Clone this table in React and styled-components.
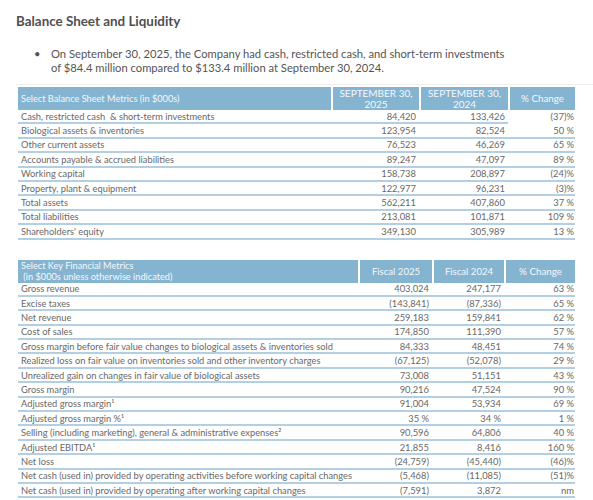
import React from "react";
import styled, { createGlobalStyle } from "styled-components";

const GlobalStyle = createGlobalStyle`
  body {
    margin: 0;
    background: #fff;
    font-family: Lato, "Open Sans", sans-serif;
  }
`;

const balanceRows = [
  ["Cash, restricted cash  & short-term investments", "84,420", "133,426", "(37)%"],
  ["Biological assets & inventories", "123,954", "82,524", "50 %"],
  ["Other current assets", "76,523", "46,269", "65 %"],
  ["Accounts payable & accrued liabilities", "89,247", "47,097", "89 %"],
  ["Working capital", "158,738", "208,897", "(24)%"],
  ["Property, plant & equipment", "122,977", "96,231", "(3)%"],
  ["Total assets", "562,211", "407,860", "37 %"],
  ["Total liabilities", "213,081", "101,871", "109 %"],
  ["Shareholders' equity", "349,130", "305,989", "13 %"],
];

const keyRows = [
  ["Gross revenue", "403,024", "247,177", "63 %"],
  ["Excise taxes", "(143,841)", "(87,336)", "65 %"],
  ["Net revenue", "259,183", "159,841", "62 %"],
  ["Cost of sales", "174,850", "111,390", "57 %"],
  ["Gross margin before fair value changes to biological assets & inventories sold", "84,333", "48,451", "74 %"],
  ["Realized loss on fair value on inventories sold and other inventory charges", "(67,125)", "(52,078)", "29 %"],
  ["Unrealized gain on changes in fair value of biological assets", "73,008", "51,151", "43 %"],
  ["Gross margin", "90,216", "47,524", "90 %"],
  ["Adjusted gross margin\u00b9", "91,004", "53,934", "69 %"],
  ["Adjusted gross margin %\u00b9", "35 %", "34 %", "1 %"],
  ["Selling (including marketing), general & administrative expenses\u00b2", "90,596", "64,806", "40 %"],
  ["Adjusted EBITDA\u00b9", "21,855", "8,416", "160 %"],
  ["Net loss", "(24,759)", "(45,440)", "(46)%"],
  ["Net cash (used in) provided by operating activities before working capital changes", "(5,468)", "(11,085)", "(51)%"],
  ["Net cash (used in) provided by operating after working capital changes", "(7,591)", "3,872", "nm"],
];

const Page = styled.div`
  width: 593px;
  padding: 13px 0 0 16px;
  box-sizing: border-box;
`;

const Title = styled.h2`
  margin: 0;
  font-size: 13.4px;
  font-weight: 700;
  color: #505050;
  line-height: 16px;
`;

const Bullets = styled.ul`
  margin: 18px 0 0;
  padding: 0 0 0 18px;
  list-style: none;
`;

const Bullet = styled.li`
  position: relative;
  padding-left: 17px;
  font-size: 11.2px;
  line-height: 14px;
  color: #555;
  &::before {
    content: "•";
    position: absolute;
    left: 0;
    top: 0;
  }
`;

const Divider = styled.div`
  margin-top: 9px;
  border-top: 1px solid #eeeeee;
`;

const Table = styled.table`
  margin: ${(p) => p.$top}px 0 0 2px;
  width: 557px;
  border-collapse: separate;
  border-spacing: 0;
  table-layout: fixed;
  color: #686868;
`;

const Head = styled.th`
  background: #85b4d1;
  color: #f4f8fb;
  font-weight: 400;
  font-size: ${(p) => p.$size}px;
  height: 23px;
  padding: 0 3px;
  line-height: 11px;
  text-align: ${(p) => (p.$left ? "left" : "center")};
  border-left: ${(p) => (p.$left ? "0" : "2px solid #fff")};
  vertical-align: middle;
  white-space: pre;
`;

const Row = styled.tr`
  height: ${(p) => p.$h}px;
`;

const Cell = styled.td`
  padding: 0 ${(p) => (p.$pct ? 1 : 3)}px 0 3px;
  font-size: ${(p) => p.$size}px;
  line-height: 11px;
  white-space: pre;
  text-align: ${(p) => (p.$left ? "left" : "right")};
  vertical-align: middle;
  border-bottom: 2px solid ${(p) => (p.$noLine ? "#fff" : "#b2cfe3")};
`;

function MetricsTable({ top, rowHeight, label, cols, widths, rows, sizes, skipFirstLine }) {
  return (
    <Table $top={top}>
      <colgroup>
        {widths.map((w, i) => (
          <col key={i} style={{ width: w }} />
        ))}
      </colgroup>
      <thead>
        <tr>
          <Head $left $size={sizes.headLabel}>{label}</Head>
          {cols.map((c, i) => (
            <Head key={i} $size={sizes.head[i]}>{c}</Head>
          ))}
        </tr>
      </thead>
      <tbody>
        {rows.map((r, i) => (
          <Row key={i} $h={rowHeight}>
            <Cell $left $size={sizes.label}>{r[0]}</Cell>
            <Cell $size={sizes.num}>{r[1]}</Cell>
            <Cell $size={sizes.num}>{r[2]}</Cell>
            <Cell $pct $size={sizes.num} $noLine={skipFirstLine && i === 0}>{r[3]}</Cell>
          </Row>
        ))}
      </tbody>
    </Table>
  );
}

export default function App() {
  return (
    <>
      <GlobalStyle />
      <Page>
        <Title>Balance Sheet and Liquidity</Title>
        <Bullets>
          <Bullet>
            On September 30, 2025, the Company had cash, restricted cash, and short-term investments
            <br />
            of $84.4 million compared to $133.4 million at September 30, 2024.
          </Bullet>
        </Bullets>
        <Divider />
        <MetricsTable
          top={2}
          rowHeight={14.4}
          label="Select Balance Sheet Metrics (in $000s)"
          cols={["SEPTEMBER 30,\n2025", "SEPTEMBER 30,\n2024", "% Change"]}
          widths={[313, 88, 89, 67]}
          rows={balanceRows}
          sizes={{ headLabel: 9.2, head: [10, 10, 9.8], label: 9.3, num: 9.4 }}
          skipFirstLine
        />
        <MetricsTable
          top={20}
          rowHeight={14.4}
          label={"Select Key Financial Metrics\n (in $000s unless otherwise indicated)"}
          cols={["Fiscal 2025", "Fiscal 2024", "% Change"]}
          widths={[340, 74, 72, 71]}
          rows={keyRows}
          sizes={{ headLabel: 9.2, head: [9.6, 9.6, 9.8], label: 9.3, num: 9.4 }}
        />
      </Page>
    </>
  );
}
